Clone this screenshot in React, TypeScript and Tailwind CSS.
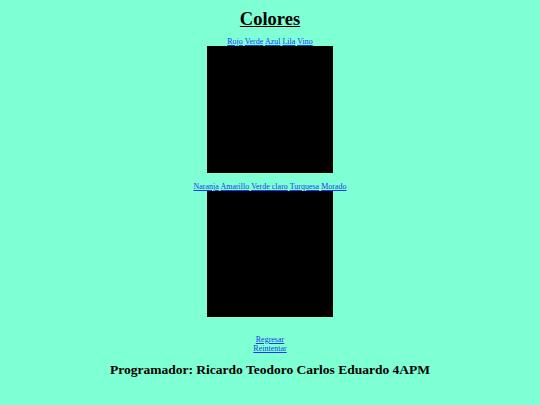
const fila1 = ["Rojo", "Verde", "Azul", "Lila", "Vino"];
const fila2 = ["Naranja", "Amarillo", "Verde claro", "Turquesa", "Morado"];

function Enlaces({ items }: { items: string[] }) {
  return (
    <div className="text-center text-[8px] leading-[9px] h-[9px] whitespace-nowrap">
      {items.map((c, i) => (
        <span key={c}>
          {i > 0 && " "}
          <a href="#" className="text-[#1a3cf0] underline">
            {c}
          </a>
        </span>
      ))}
    </div>
  );
}

export default function App() {
  return (
    <div
      className="w-[540px] h-[405px] bg-[#7fffd4] flex flex-col items-center text-black"
      style={{ fontFamily: '"Liberation Serif", "DejaVu Serif", serif' }}
    >
      <h1 className="mt-[9px] text-[18.5px] leading-[20px] font-bold underline">Colores</h1>
      <div className="mt-[8px]">
        <Enlaces items={fila1} />
      </div>
      <div className="w-[126px] h-[127px] bg-black" />
      <div className="mt-[9px]">
        <Enlaces items={fila2} />
      </div>
      <div className="w-[126px] h-[126px] bg-black" />
      <div className="mt-[18px] flex flex-col items-center text-[8px] leading-[9px]">
        <a href="#" className="text-[#1a3cf0] underline">Regresar</a>
        <a href="#" className="text-[#1a3cf0] underline">Reintentar</a>
      </div>
      <p className="mt-[9px] text-[13.5px] leading-[16px] font-bold">
        Programador: Ricardo Teodoro Carlos Eduardo 4APM
      </p>
    </div>
  );
}
